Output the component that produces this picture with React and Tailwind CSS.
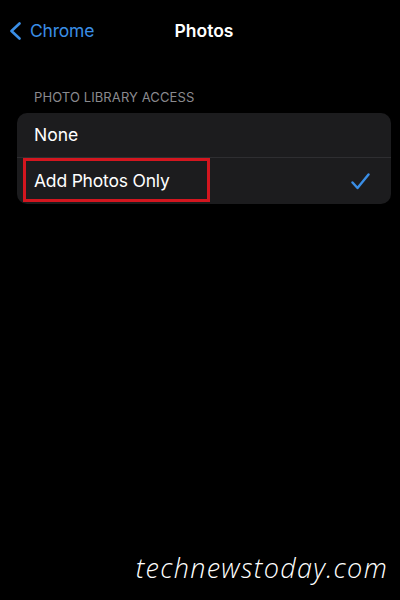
import React from 'react';

const font = { fontFamily: 'Inter, "Noto Sans", sans-serif' };

const App = () => {
  return (
    <div className="w-[400px] h-[600px] bg-black text-white flex flex-col overflow-hidden" style={font}>
      {/* Nav bar */}
      <div className="relative h-[62px] flex items-center px-[9px]">
        <div className="flex items-center gap-[8px] text-[#3a8ee6]">
          <svg width="13" height="18" viewBox="0 0 13 18" fill="none" stroke="currentColor" strokeWidth="2.6" strokeLinecap="round" strokeLinejoin="round">
            <path d="M10.5 1.5 L2.5 9 L10.5 16.5" />
          </svg>
          <span className="text-[17.5px] tracking-[-0.2px]">Chrome</span>
        </div>
        <span className="absolute left-0 right-0 text-center text-[17.5px] font-semibold pl-[8px]">Photos</span>
      </div>

      {/* Section header */}
      <div className="mt-[29px] px-[34px] text-[13px] text-[#8a8a8e] tracking-[0.1px] leading-none">
        PHOTO LIBRARY ACCESS
      </div>

      {/* Card */}
      <div className="mt-[9px] ml-[17px] mr-[9px] bg-[#1c1c1e] rounded-[10px] flex flex-col">
        <div className="h-[45px] flex items-center px-[17px] border-b border-[#2e2e31]">
          <span className="text-[17.5px]">None</span>
        </div>
        <div className="relative h-[46px] flex items-center pl-[17px] pr-[21px]">
          <span className="text-[17.5px] tracking-[-0.2px]">Add Photos Only</span>
          <div className="absolute left-[6px] top-[0px] w-[187px] h-[44px] border-[3px] border-[#d3161f]" />
          <svg className="ml-auto" width="19" height="17" viewBox="0 0 19 17" fill="none" stroke="#3a8ee6" strokeWidth="2.4" strokeLinecap="round" strokeLinejoin="round">
            <path d="M1.5 9.5 L6.5 15 L17.5 1.5" />
          </svg>
        </div>
      </div>

      {/* Watermark */}
      <div className="mt-auto mb-[12px] pr-[12px] text-right">
        <span className="text-[27px] italic font-light tracking-[1.3px]" style={{ fontFamily: '"Open Sans", Lato, sans-serif' }}>
          technewstoday.com
        </span>
      </div>
    </div>
  );
};

export default App;
